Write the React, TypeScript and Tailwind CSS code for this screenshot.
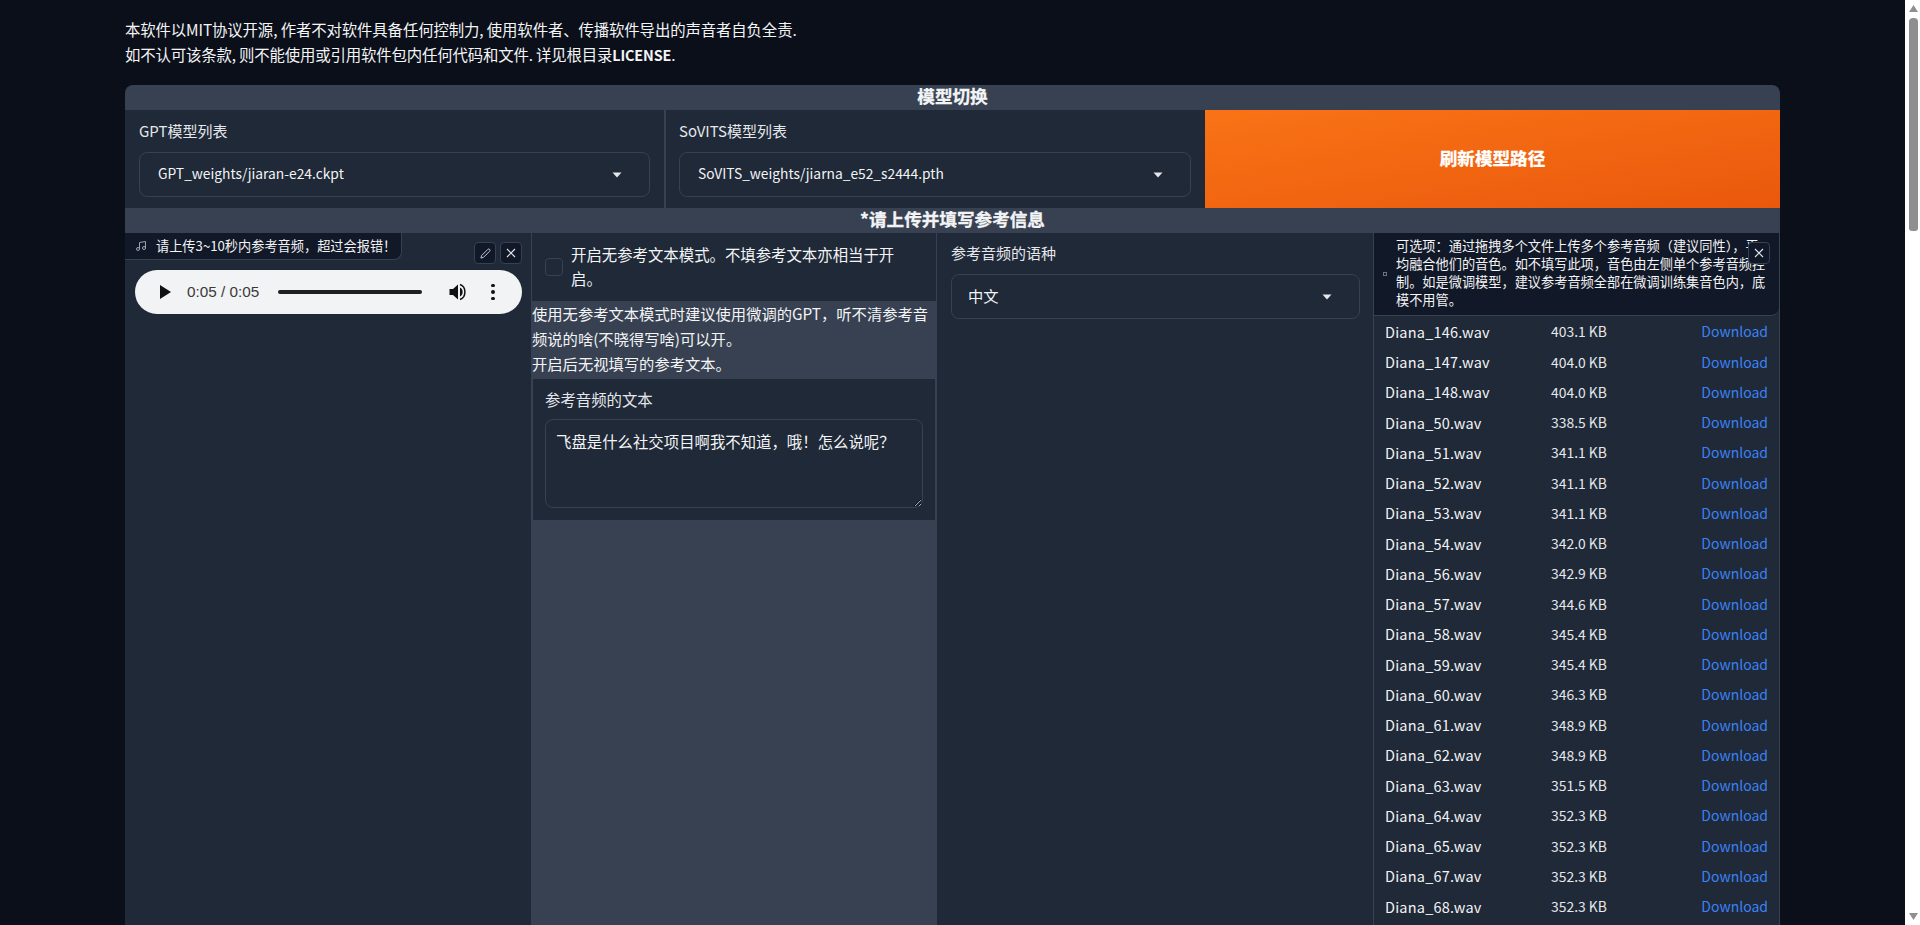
const files: [string, string][] = [
  ["Diana_146.wav", "403.1 KB"], ["Diana_147.wav", "404.0 KB"], ["Diana_148.wav", "404.0 KB"],
  ["Diana_50.wav", "338.5 KB"], ["Diana_51.wav", "341.1 KB"], ["Diana_52.wav", "341.1 KB"],
  ["Diana_53.wav", "341.1 KB"], ["Diana_54.wav", "342.0 KB"], ["Diana_56.wav", "342.9 KB"],
  ["Diana_57.wav", "344.6 KB"], ["Diana_58.wav", "345.4 KB"], ["Diana_59.wav", "345.4 KB"],
  ["Diana_60.wav", "346.3 KB"], ["Diana_61.wav", "348.9 KB"], ["Diana_62.wav", "348.9 KB"],
  ["Diana_63.wav", "351.5 KB"], ["Diana_64.wav", "352.3 KB"], ["Diana_65.wav", "352.3 KB"],
  ["Diana_67.wav", "352.3 KB"], ["Diana_68.wav", "352.3 KB"],
];

function Caret({ className }: { className: string }) {
  return (
    <svg className={className} width="10" height="6" viewBox="0 0 10 6">
      <path d="M0.5 0.5 H9.5 L5 5.5 Z" fill="#e5e7eb" />
    </svg>
  );
}

function Select({ value, big }: { value: string; big?: boolean }) {
  return (
    <div className="flex h-[45px] items-center justify-between rounded-lg border border-[#374151] bg-[#1f2937] pl-[18px] pr-[27px] text-[#f3f4f6]">
      <span className={big ? "-ml-[2px] pb-[2px] text-[15.3px]" : "pb-[2px] text-[13.8px]"}>{value}</span>
      <Caret className="shrink-0" />
    </div>
  );
}

function Title({ text }: { text: string }) {
  return (
    <div className="flex h-[25px] items-center justify-center pb-[4px] text-[17.6px] font-bold leading-[21px] text-[#f3f4f6] [-webkit-text-stroke:0.3px_#f3f4f6]">
      {text}
    </div>
  );
}

function IconButton({ children, className }: { children: React.ReactNode; className?: string }) {
  return (
    <div className={`flex h-[22px] w-[22px] items-center justify-center rounded border border-[#374151] bg-[#111827] text-[#e5e7eb] ${className ?? ""}`}>
      {children}
    </div>
  );
}

const XIcon = () => (
  <svg width="10" height="10" viewBox="0 0 10 10" fill="none" stroke="#e5e7eb" strokeWidth="1.1">
    <path d="M1 1 L9 9 M9 1 L1 9" />
  </svg>
);

export default function App() {
  return (
    <div
      className="flex h-screen overflow-hidden bg-[#0b0f19] text-[#f3f4f6]"
      style={{ fontFamily: '"Noto Sans CJK SC", "Noto Sans", sans-serif' }}
    >
      <div className="h-full min-w-0 flex-1 overflow-hidden px-[125px] pt-[17px]">
        <div className="h-[51px] text-[15.4px] leading-[25px]">
          <p className="tracking-[-0.11px]">本软件以MIT协议开源, 作者不对软件具备任何控制力, 使用软件者、传播软件导出的声音者自负全责.</p>
          <p className="tracking-[-0.15px]">如不认可该条款, 则不能使用或引用软件包内任何代码和文件. 详见根目录<b className="text-[14.4px] font-semibold">LICENSE</b>.</p>
        </div>

        <div className="mt-[17px] flex h-[3700px] flex-col rounded-t-lg bg-[#374151]">
          <Title text="模型切换" />
          <div className="flex h-[98px] gap-[2px]">
            <div className="w-[539px] bg-[#1f2937] px-[14px] pt-[9px]">
              <div className="mb-[9px] h-[24px] text-[15px] leading-[24px] text-[#e5e7eb]">GPT模型列表</div>
              <Select value="GPT_weights/jiaran-e24.ckpt" />
            </div>
            <div className="w-[539px] bg-[#1f2937] pl-[13px] pr-[14px] pt-[9px]">
              <div className="mb-[9px] h-[24px] text-[15px] leading-[24px] text-[#e5e7eb]">SoVITS模型列表</div>
              <Select value="SoVITS_weights/jiarna_e52_s2444.pth" />
            </div>
            <div className="-ml-[2px] flex flex-1 items-center justify-center bg-gradient-to-br from-[#f97316] to-[#ea580c] pb-[2px] text-[17.6px] font-bold text-white [-webkit-text-stroke:0.3px_#ffffff]">
              刷新模型路径
            </div>
          </div>
          <Title text="*请上传并填写参考信息" />

          <div className="flex flex-1 gap-px">
            {/* upload */}
            <div className="relative w-[406px] bg-[#1f2937]">
              <div className="flex h-[27px] w-[277px] items-center rounded-br-lg border-b border-r border-[#374151] bg-[#111827] pb-[1px] pl-[10px] text-[13.2px]">
                <svg className="mr-[9px]" width="12" height="12" viewBox="0 0 24 24" fill="none" stroke="#9ca3af" strokeWidth="2">
                  <path d="M9 18V5l12-2v13" />
                  <circle cx="6" cy="18" r="3" />
                  <circle cx="18" cy="16" r="3" />
                </svg>
                请上传3~10秒内参考音频，超过会报错！
              </div>
              <div className="absolute right-[9px] top-[9px] flex gap-[4px]">
                <IconButton>
                  <svg width="11" height="11" viewBox="0 0 24 24" fill="none" stroke="#d1d5db" strokeWidth="2">
                    <path d="M17 3a2.828 2.828 0 1 1 4 4L7.5 20.5 2 22l1.5-5.5L17 3z" />
                  </svg>
                </IconButton>
                <IconButton><XIcon /></IconButton>
              </div>
              <div className="ml-[10px] mt-[10px] flex h-[44px] w-[387px] items-center rounded-full bg-[#f1f3f4] pl-[25px] pr-[26px]">
                <svg width="11" height="14" viewBox="0 0 11 14"><path d="M0 0 L11 7 L0 14 Z" fill="#111" /></svg>
                <span className="ml-[16px] w-[74px] whitespace-nowrap text-[15.3px] text-[#3a3a3a]" style={{ fontFamily: '"Liberation Sans", sans-serif' }}>0:05 / 0:05</span>
                <div className="ml-[17px] h-[4px] w-[144px] rounded-full bg-[#1f1f1f]" />
                <svg className="ml-[27px]" width="18" height="18" viewBox="0 0 18 18">
                  <path d="M0.5 6 H4 L9 1.5 V16.5 L4 12 H0.5 Z" fill="#111" />
                  <path d="M11 4.5 C14.5 6 14.5 12 11 13.5 Z" fill="#111" />
                  <path d="M11 1.5 C17.5 3.5 17.5 14.5 11 16.5" fill="none" stroke="#111" strokeWidth="1.5" />
                </svg>
                <div className="ml-[24px] flex flex-col gap-[3px]">
                  <div className="h-[3.5px] w-[3.5px] rounded-full bg-[#111]" />
                  <div className="h-[3.5px] w-[3.5px] rounded-full bg-[#111]" />
                  <div className="h-[3.5px] w-[3.5px] rounded-full bg-[#111]" />
                </div>
              </div>
            </div>

            {/* reference text */}
            <div className="flex w-[404px] flex-col">
              <div className="flex h-[68px] items-center bg-[#1f2937] pl-[13px] pr-[28px]">
                <div className="h-[18px] w-[18px] shrink-0 rounded border border-[#374151] bg-[#1f2937]" />
                <div className="ml-[8px] pb-[3px] text-[15.4px] leading-[24px]">开启无参考文本模式。不填参考文本亦相当于开启。</div>
              </div>
              <div className="h-[78px] text-[15.3px] leading-[25px]">
                <p>使用无参考文本模式时建议使用微调的GPT，听不清参考音频说的啥(不晓得写啥)可以开。</p>
                <p>开启后无视填写的参考文本。</p>
              </div>
              <div className="h-[141px] border-x border-[#374151] bg-[#1f2937] px-[12px] pt-[8px]">
                <div className="h-[24px] text-[15.4px] leading-[24px] text-[#e5e7eb]">参考音频的文本</div>
                <textarea
                  readOnly
                  className="mt-[8px] h-[89px] w-full rounded-lg border border-[#374151] bg-[#1f2937] px-[10px] py-[10px] text-[15.4px] leading-[22px] text-[#f3f4f6] outline-none"
                  defaultValue="飞盘是什么社交项目啊我不知道，哦！怎么说呢？"
                />
              </div>
            </div>

            {/* language */}
            <div className="w-[436px] bg-[#1f2937] pl-[14px] pr-[13px] pt-[8px]">
              <div className="mb-[9px] h-[24px] text-[15px] leading-[24px] text-[#e5e7eb]">参考音频的语种</div>
              <Select value="中文" big />
            </div>

            {/* multi upload */}
            <div className="relative flex-1 border-r border-[#374151] bg-[#1f2937]">
              <div className="flex h-[83px] items-start rounded-br-lg border-b border-[#374151] bg-[#111827] pl-[9px] pr-[13px] text-[13.2px] leading-[18px]">
                <div className="mr-[9px] mt-[39px] h-[4px] w-[4px] shrink-0 border border-[#6b7280]" />
                <div className="mt-[4px]">可选项：通过拖拽多个文件上传多个参考音频（建议同性），平均融合他们的音色。如不填写此项，音色由左侧单个参考音频控制。如是微调模型，建议参考音频全部在微调训练集音色内，底模不用管。</div>
              </div>
              <IconButton className="absolute right-[9px] top-[9px]"><XIcon /></IconButton>
              <div className="px-[11px] pt-[0.7px]">
                {files.map(([n, s]) => (
                  <div key={n} className="flex h-[30.25px] items-center">
                    <span className="w-[166px] text-[14.5px] tracking-[0.2px]">{n}</span>
                    <span className="flex-1 text-[13.9px] text-[#e5e7eb]">{s}</span>
                    <span className="text-[14px] text-[#3b82f6]">Download</span>
                  </div>
                ))}
              </div>
            </div>
          </div>
        </div>
      </div>

      {/* page scrollbar */}
      <div className="flex h-full w-[15px] shrink-0 flex-col items-center bg-white pl-[1px]">
        <svg className="mt-[5px]" width="9" height="7" viewBox="0 0 9 7"><path d="M4.5 0 L9 7 H0 Z" fill="#8f8f8f" /></svg>
        <div className="mt-[6px] h-[213px] w-[9px] rounded-t-[4px] rounded-b-[3px] bg-[#8f8f8f]" />
        <svg className="mb-[5px] mt-auto" width="9" height="7" viewBox="0 0 9 7"><path d="M0 0 H9 L4.5 7 Z" fill="#8f8f8f" /></svg>
      </div>
    </div>
  );
}
